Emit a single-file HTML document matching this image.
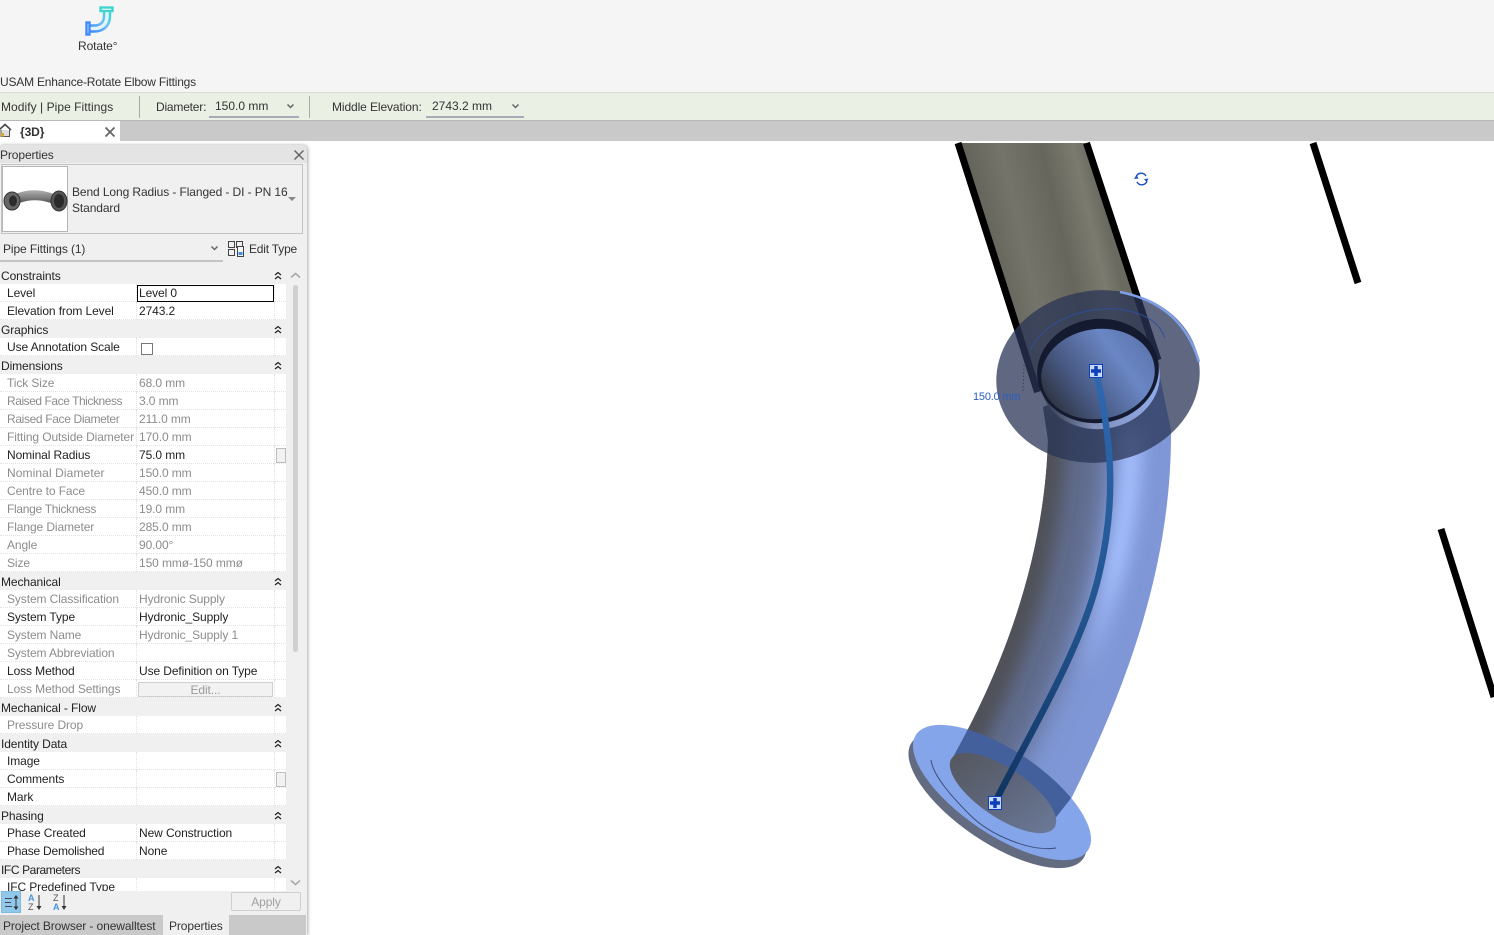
<!DOCTYPE html>
<html><head><meta charset="utf-8">
<style>
html,body{margin:0;padding:0;background:#fff}
body{width:1494px;height:935px;overflow:hidden;position:relative;font-family:"Liberation Sans",sans-serif;font-size:12px;color:#222;letter-spacing:-.1px}
.a{position:absolute;white-space:nowrap}
#tbl{position:absolute;left:0;top:266px;width:286px;height:625px;overflow:hidden;background:#fff}
.r{position:relative;height:18px;line-height:18px;box-sizing:border-box;border-bottom:1px dotted #e2e2e2}
.r i{position:absolute;top:0;font-style:normal;white-space:nowrap}
.r .n{left:7px}.r .v{left:139px}
.r:before{content:"";position:absolute;left:136px;top:0;height:18px;border-left:1px dotted #e2e2e2}
.r:after{content:"";position:absolute;left:274px;top:0;height:18px;border-left:1px dotted #e2e2e2}
.g{color:#8c8c8c}
.s{height:18px;line-height:20px;background:#f0f0f0;position:relative;padding-left:1px;color:#222}
.s svg{position:absolute;left:274px;top:5px}
.box{position:absolute;left:276px;top:2px;width:8px;height:13px;border:1px solid #bdbdbd;background:#f2f2f2}
</style></head><body>
<!-- top ribbon -->
<div class="a" style="left:0;top:0;width:1494px;height:93px;background:#f5f5f5"></div>
<svg class="a" style="left:80px;top:4px" width="36" height="32" viewBox="0 0 36 32">
<defs><linearGradient id="ic" x1="0" y1="1" x2="1" y2="0"><stop offset="0" stop-color="#3f8cff"/><stop offset=".55" stop-color="#6cc0f5"/><stop offset="1" stop-color="#3fd6d0"/></linearGradient></defs>
<path d="M9 24.500H14C22 24.500 27 20 27 12V8" fill="none" stroke="url(#ic)" stroke-width="8.500"/>
<path d="M9 24.500H14C22 24.500 27 20 27 12V8" fill="none" stroke="#e4f3fb" stroke-width="3.500"/>
<rect x="6.500" y="18.500" width="3" height="12" fill="#f5f5f5" stroke="#3f8cff" stroke-width="2.400"/>
<rect x="20.500" y="3.500" width="12" height="3.500" fill="#f5f5f5" stroke="#3fd6d0" stroke-width="2.400"/>
</svg>
<div class="a" style="left:78px;top:39px;color:#333">Rotate°</div>
<div class="a" style="left:0;top:75px;color:#333;letter-spacing:-.2px">USAM Enhance-Rotate Elbow Fittings</div>
<!-- options bar -->
<div class="a" style="left:0;top:92px;width:1494px;height:29px;background:#eaf0e4;border-top:1px solid #d8dcd4;border-bottom:1px solid #b8b8b8;box-sizing:border-box"></div>
<div class="a" style="left:1px;top:100px;color:#333;letter-spacing:.05px">Modify | Pipe Fittings</div>
<div class="a" style="left:139px;top:96px;width:1px;height:22px;background:#aaa"></div>
<div class="a" style="left:156px;top:100px;color:#333;letter-spacing:-.2px">Diameter:</div>
<div class="a" style="left:215px;top:99px;color:#333;letter-spacing:0">150.0 mm</div>
<div class="a" style="left:209px;top:116px;width:90px;height:2px;background:#aab"></div>
<svg class="a" style="left:286px;top:103px" width="9" height="7"><path d="M1.500 1.500L4.500 4.500L7.500 1.500" fill="none" stroke="#666" stroke-width="1.500"/></svg>
<div class="a" style="left:309px;top:96px;width:1px;height:22px;background:#aaa"></div>
<div class="a" style="left:332px;top:100px;color:#333">Middle Elevation:</div>
<div class="a" style="left:432px;top:99px;color:#333;letter-spacing:0">2743.2 mm</div>
<div class="a" style="left:426px;top:116px;width:98px;height:2px;background:#aab"></div>
<svg class="a" style="left:511px;top:103px" width="9" height="7"><path d="M1.500 1.500L4.500 4.500L7.500 1.500" fill="none" stroke="#666" stroke-width="1.500"/></svg>
<!-- tab bar -->
<div class="a" style="left:0;top:121px;width:1494px;height:20px;background:#c9c9c9"></div>
<div class="a" style="left:0;top:121px;width:120px;height:20px;background:#fff"></div>
<svg class="a" style="left:0;top:123px" width="13" height="15" viewBox="0 0 13 15"><path d="M-1 7L5 1.500L11 7" fill="none" stroke="#444" stroke-width="1.600"/><path d="M1 7V13.500H9.500V7" fill="#ddd" stroke="#555"/><rect x="1" y="10" width="3" height="3.500" fill="#d9a83a"/></svg>
<div class="a" style="left:20px;top:125px;font-weight:bold;color:#333">{3D}</div>
<svg class="a" style="left:104px;top:126px" width="12" height="12"><path d="M1.500 1.500L10.500 10.500M10.500 1.500L1.500 10.500" stroke="#666" stroke-width="1.800"/></svg>

<!-- viewport -->
<svg class="a" style="left:0;top:0" width="1494" height="935" viewBox="0 0 1494 935">
<defs>
<linearGradient id="pp" gradientUnits="userSpaceOnUse" x1="965" y1="200" x2="1095" y2="170">
<stop offset="0" stop-color="#5f5f55"/><stop offset=".35" stop-color="#74746a"/><stop offset=".65" stop-color="#66665c"/><stop offset=".88" stop-color="#7b7b70"/><stop offset="1" stop-color="#6a6a60"/></linearGradient>
<linearGradient id="inn" gradientUnits="userSpaceOnUse" x1="1040" y1="410" x2="1150" y2="350">
<stop offset="0" stop-color="#26272c"/><stop offset=".35" stop-color="#46577f"/><stop offset=".75" stop-color="#6a86c4"/><stop offset="1" stop-color="#5d76b0"/></linearGradient>
<linearGradient id="lip" gradientUnits="userSpaceOnUse" x1="1045" y1="400" x2="1150" y2="400"><stop offset="0" stop-color="#3a4258"/><stop offset=".4" stop-color="#8190b8"/><stop offset="1" stop-color="#8fa8e6"/></linearGradient>
<linearGradient id="cl" gradientUnits="userSpaceOnUse" x1="0" y1="372" x2="0" y2="802"><stop offset="0" stop-color="#2f68b2"/><stop offset=".55" stop-color="#22558f"/><stop offset=".85" stop-color="#173f72"/><stop offset="1" stop-color="#10345f"/></linearGradient>
<linearGradient id="hl" gradientUnits="userSpaceOnUse" x1="0" y1="470" x2="0" y2="680"><stop offset="0" stop-color="#a6c0ff"/><stop offset=".45" stop-color="#a6c0ff"/><stop offset="1" stop-color="#a6c0ff" stop-opacity="0"/></linearGradient>
<filter id="b1" filterUnits="userSpaceOnUse" x="880" y="380" width="340" height="500"><feGaussianBlur stdDeviation="14"/></filter>
<filter id="b2" filterUnits="userSpaceOnUse" x="880" y="380" width="340" height="500"><feGaussianBlur stdDeviation="8"/></filter>
<linearGradient id="hole" gradientUnits="userSpaceOnUse" x1="950" y1="770" x2="1060" y2="810"><stop offset="0" stop-color="#55585f"/><stop offset=".5" stop-color="#5e667c"/><stop offset="1" stop-color="#6a7896"/></linearGradient>
<clipPath id="elc"><path d="M1043 407L1048 440C1045 540 1015 640 965 735L950 763L1050 825L1072 797C1130 680 1172 560 1171 430L1157 363Z"/></clipPath>
</defs>
<!-- lower flange face -->
<ellipse cx="997.500" cy="800.500" rx="103.600" ry="42" fill="#626b80" transform="rotate(34 997.500 800.500)"/>
<ellipse cx="1002" cy="792.500" rx="103.600" ry="42" fill="#85a5ea" transform="rotate(34 1002 792.500)"/>
<!-- elbow -->
<path d="M1043 407L1048 440C1045 540 1015 640 965 735L950 763L1050 825L1072 797C1130 680 1172 560 1171 430L1157 363Z" fill="#7f97d6"/>
<g clip-path="url(#elc)">
<path d="M1048 400C1045 540 1015 640 965 735L950 763" fill="none" stroke="#5f6b8a" stroke-width="125" filter="url(#b1)"/>
<path d="M1048 400C1045 540 1015 640 965 735L950 763" fill="none" stroke="#4f5158" stroke-width="40" filter="url(#b2)"/>
<path d="M1131 430C1133 510 1110 620 1060 730" fill="none" stroke="url(#hl)" stroke-width="20" filter="url(#b2)"/>
<ellipse cx="1002" cy="792.500" rx="103.600" ry="42" fill="#44609c" transform="rotate(34 1002 792.500)"/></g>
<ellipse cx="1003" cy="793" rx="62" ry="24.500" fill="url(#hole)" transform="rotate(34 1003 793)"/>
<path d="M931 760C933 775 950 795 970 815S1030 852 1056 848" fill="none" stroke="#3c4c7a" stroke-width="1"/>
<!-- upper pipe -->
<path d="M958 143H1086.500L1158 360L1037.500 392Z" fill="url(#pp)"/>
<path d="M958 143L1037.500 392M1086.500 143L1158 360" stroke="#000" stroke-width="7" fill="none"/>
<!-- upper flange -->
<ellipse cx="1098" cy="376.500" rx="102" ry="86" fill="#2a3656" fill-opacity=".75" transform="rotate(-8 1098 376.500)"/>
<path d="M1120 292Q1182 304 1199 362" fill="none" stroke="#7f9fe6" stroke-width="2.500"/>
<path d="M1030 350C1055 300 1150 295 1165 338" fill="none" stroke="#2f4f9a" stroke-width="1"/>
<ellipse cx="1100" cy="378" rx="60" ry="51" fill="url(#lip)" transform="rotate(-8 1100 378)"/>
<ellipse cx="1098" cy="371" rx="61" ry="52" fill="#141b31" transform="rotate(-8 1098 371)"/>
<ellipse cx="1098" cy="374" rx="57" ry="45" fill="url(#inn)" transform="rotate(-8 1098 374)"/>
<!-- centerline -->
<path d="M1096 372C1112 440 1116 500 1100 570C1085 640 1040 715 995 802" fill="none" stroke="url(#cl)" stroke-width="6.500"/>
<!-- other lines -->
<path d="M1313 143L1358 283M1441 529L1494 697" stroke="#000" stroke-width="7" fill="none"/>
<!-- dim -->
<path d="M1024 365L1023 392" stroke="#444" stroke-dasharray="1.500 2" fill="none"/>
<text x="973" y="400" font-family="Liberation Sans,sans-serif" font-size="11" fill="#2a5cc4" letter-spacing="-.2">150.0 mm</text>
<!-- rotate icon -->
<g fill="none" stroke="#1a52c0" stroke-width="1.400"><path d="M1136 177A5.500 5.500 0 0 1 1146 176"/><path d="M1147 181A5.500 5.500 0 0 1 1137 182"/></g>
<path d="M1134 179L1138.500 178.500L1136.500 175ZM1148.500 178.500L1144 179L1146.500 182Z" fill="#1a52c0"/>
<!-- grips -->
<rect x="1089.500" y="364.500" width="13" height="13" fill="#c9d8f4" stroke="#0c3fb8"/><path d="M1096 366V376M1091 371H1101" stroke="#0c3fb8" stroke-width="3.500"/>
<rect x="988.500" y="796.500" width="13" height="13" fill="#c9d8f4" stroke="#0c3fb8"/><path d="M995 798V808M990 803H1000" stroke="#0c3fb8" stroke-width="3.500"/>
</svg>

<!-- properties panel -->
<div class="a" style="left:0;top:145px;width:307px;height:790px;background:#f0f0f0;border-radius:0 5px 0 0;box-shadow:1px 0 3px #aaa"></div>
<div class="a" style="left:0;top:145px;width:307px;height:18px;background:#e4e4e4;border-radius:0 5px 0 0"></div>
<div class="a" style="left:0;top:148px;color:#333">Properties</div>
<svg class="a" style="left:293px;top:149px" width="12" height="12"><path d="M1.500 1.500L10.500 10.500M10.500 1.500L1.500 10.500" stroke="#666" stroke-width="1.500"/></svg>
<div class="a" style="left:1px;top:164px;width:300px;height:68px;border:1px solid #c4c4c4;background:#f0f0f0"></div>
<div class="a" style="left:2px;top:166px;width:66px;height:66px;border:1px solid #b5b5b5;background:#fff;box-sizing:border-box"></div>
<svg class="a" style="left:2px;top:183px" width="66" height="32" viewBox="0 0 66 32">
<defs><linearGradient id="th" x1="0" y1="0" x2="0" y2="1"><stop offset="0" stop-color="#b0b0b0"/><stop offset=".5" stop-color="#777"/><stop offset="1" stop-color="#333"/></linearGradient></defs>
<path d="M8 14C22 5 42 5 58 14L57 24C42 15 24 15 9 24Z" fill="url(#th)"/>
<ellipse cx="10" cy="18" rx="8" ry="9" fill="#666" stroke="#333"/><ellipse cx="11" cy="18" rx="4" ry="5.500" fill="#2c2c2c"/>
<ellipse cx="57" cy="18" rx="8" ry="10" fill="#555" stroke="#333"/><ellipse cx="57" cy="18" rx="5" ry="7" fill="#2a2a2a"/>
</svg>
<div class="a" style="left:72px;top:185px;color:#333">Bend Long Radius - Flanged - DI - PN 16</div>
<div class="a" style="left:72px;top:201px;color:#333">Standard</div>
<svg class="a" style="left:288px;top:197px" width="9" height="5"><path d="M0 0H8L4 4Z" fill="#888"/></svg>
<div class="a" style="left:3px;top:242px;color:#333">Pipe Fittings (1)</div>
<div class="a" style="left:0;top:260px;width:223px;height:2px;background:#c4c4c4"></div>
<svg class="a" style="left:210px;top:245px" width="9" height="7"><path d="M1.500 1.500L4.500 4.500L7.500 1.500" fill="none" stroke="#666" stroke-width="1.500"/></svg>
<svg class="a" style="left:227px;top:240px" width="18" height="18" viewBox="0 0 18 18" fill="none" stroke="#444"><rect x="1.500" y="1.500" width="6" height="6"/><rect x="9.500" y="1.500" width="6" height="6"/><rect x="1.500" y="9.500" width="6" height="6"/><rect x="10.500" y="6.500" width="6" height="10" fill="#f5f5f5"/><rect x="11.500" y="12" width="4" height="3" fill="#3f8fdf" stroke="none"/></svg>
<div class="a" style="left:249px;top:242px;color:#333;letter-spacing:-.2px">Edit Type</div>

<div id="tbl">
<div class="s">Constraints<svg width="8" height="9"><path d="M1 4L4 1.500L7 4M1 8L4 5.500L7 8" fill="none" stroke="#222" stroke-width="1.200"/></svg></div>
<div class="r"><i class="n">Level</i></div>
<div class="r"><i class="n">Elevation from Level</i><i class="v">2743.2</i></div>
<div class="s">Graphics<svg width="8" height="9"><path d="M1 4L4 1.500L7 4M1 8L4 5.500L7 8" fill="none" stroke="#222" stroke-width="1.200"/></svg></div>
<div class="r"><i class="n">Use Annotation Scale</i></div>
<div class="s">Dimensions<svg width="8" height="9"><path d="M1 4L4 1.500L7 4M1 8L4 5.500L7 8" fill="none" stroke="#222" stroke-width="1.200"/></svg></div>
<div class="r g"><i class="n">Tick Size</i><i class="v">68.0 mm</i></div>
<div class="r g"><i class="n" style="letter-spacing:-.45px">Raised Face Thickness</i><i class="v">3.0 mm</i></div>
<div class="r g"><i class="n" style="letter-spacing:-.35px">Raised Face Diameter</i><i class="v">211.0 mm</i></div>
<div class="r g"><i class="n">Fitting Outside Diameter</i><i class="v">170.0 mm</i></div>
<div class="r"><i class="n">Nominal Radius</i><i class="v">75.0 mm</i><b class="box"></b></div>
<div class="r g"><i class="n" style="letter-spacing:.1px">Nominal Diameter</i><i class="v">150.0 mm</i></div>
<div class="r g"><i class="n">Centre to Face</i><i class="v">450.0 mm</i></div>
<div class="r g"><i class="n" style="letter-spacing:-.3px">Flange Thickness</i><i class="v">19.0 mm</i></div>
<div class="r g"><i class="n">Flange Diameter</i><i class="v">285.0 mm</i></div>
<div class="r g"><i class="n">Angle</i><i class="v">90.00°</i></div>
<div class="r g"><i class="n">Size</i><i class="v">150 mmø-150 mmø</i></div>
<div class="s">Mechanical<svg width="8" height="9"><path d="M1 4L4 1.500L7 4M1 8L4 5.500L7 8" fill="none" stroke="#222" stroke-width="1.200"/></svg></div>
<div class="r g"><i class="n">System Classification</i><i class="v">Hydronic Supply</i></div>
<div class="r"><i class="n">System Type</i><i class="v">Hydronic_Supply</i></div>
<div class="r g"><i class="n">System Name</i><i class="v">Hydronic_Supply 1</i></div>
<div class="r g"><i class="n">System Abbreviation</i></div>
<div class="r"><i class="n">Loss Method</i><i class="v">Use Definition on Type</i></div>
<div class="r g"><i class="n">Loss Method Settings</i><span style="position:absolute;left:138px;top:2px;width:133px;height:13px;line-height:14px;border:1px solid #cfcfcf;background:#f2f2f2;text-align:center;color:#999">Edit...</span></div>
<div class="s">Mechanical - Flow<svg width="8" height="9"><path d="M1 4L4 1.500L7 4M1 8L4 5.500L7 8" fill="none" stroke="#222" stroke-width="1.200"/></svg></div>
<div class="r g"><i class="n">Pressure Drop</i></div>
<div class="s">Identity Data<svg width="8" height="9"><path d="M1 4L4 1.500L7 4M1 8L4 5.500L7 8" fill="none" stroke="#222" stroke-width="1.200"/></svg></div>
<div class="r"><i class="n">Image</i></div>
<div class="r"><i class="n">Comments</i><b class="box"></b></div>
<div class="r"><i class="n">Mark</i></div>
<div class="s">Phasing<svg width="8" height="9"><path d="M1 4L4 1.500L7 4M1 8L4 5.500L7 8" fill="none" stroke="#222" stroke-width="1.200"/></svg></div>
<div class="r"><i class="n">Phase Created</i><i class="v">New Construction</i></div>
<div class="r"><i class="n" style="letter-spacing:-.22px">Phase Demolished</i><i class="v">None</i></div>
<div class="s" style="letter-spacing:-.4px">IFC Parameters<svg width="8" height="9"><path d="M1 4L4 1.500L7 4M1 8L4 5.500L7 8" fill="none" stroke="#222" stroke-width="1.200"/></svg></div>
<div class="r"><i class="n">IFC Predefined Type</i></div>
</div>
<div class="a" style="left:137px;top:285px;width:135px;height:15px;border:1px solid #000;background:#fff;line-height:15px;text-indent:1px">Level 0</div>
<div class="a" style="left:141px;top:343px;width:10px;height:10px;border:1px solid #777;background:#fff"></div>
<!-- scrollbar -->
<div class="a" style="left:287px;top:266px;width:16px;height:625px;background:#f0f0f0"></div>
<div class="a" style="left:293px;top:285px;width:5px;height:367px;background:#d0d0d0;border-radius:3px"></div>
<svg class="a" style="left:290px;top:272px" width="11" height="7"><path d="M1 5.500L5.500 1.500L10 5.500" fill="none" stroke="#aaa" stroke-width="1.600"/></svg>
<svg class="a" style="left:290px;top:879px" width="11" height="7"><path d="M1 1.500L5.500 5.500L10 1.500" fill="none" stroke="#aaa" stroke-width="1.600"/></svg>
<!-- bottom tools -->
<div class="a" style="left:1px;top:891px;width:20px;height:22px;background:#90c8ec;border:1px solid #7fb9df;box-sizing:border-box"></div>
<svg class="a" style="left:3px;top:894px" width="18" height="18" fill="none"><path d="M2 4.500H9M2 8.500H8M2 12.500H9" stroke="#445"/><path d="M13 3V14" stroke="#333"/><path d="M13 1L10.500 4.500H15.500ZM13 16L10.500 12.500H15.500Z" fill="#333"/></svg>
<svg class="a" style="left:26px;top:892px" width="18" height="20"><text x="2" y="9" font-family="Liberation Sans,sans-serif" font-size="9" font-weight="bold" fill="#4a90e0">A</text><text x="2" y="18" font-family="Liberation Sans,sans-serif" font-size="9" fill="#555">Z</text><path d="M13 3V16" stroke="#333"/><path d="M13 18L10.500 14H15.500Z" fill="#333"/></svg>
<svg class="a" style="left:51px;top:892px" width="18" height="20"><text x="2" y="9" font-family="Liberation Sans,sans-serif" font-size="9" fill="#555">Z</text><text x="2" y="18" font-family="Liberation Sans,sans-serif" font-size="9" font-weight="bold" fill="#4a90e0">A</text><path d="M13 3V16" stroke="#333"/><path d="M13 18L10.500 14H15.500Z" fill="#333"/></svg>
<div class="a" style="left:231px;top:892px;width:68px;height:17px;border:1px solid #cfcfcf;border-radius:2px;text-align:center;line-height:18px;color:#a0a0a0">Apply</div>
<!-- bottom tabs -->
<div class="a" style="left:0;top:915px;width:306px;height:20px;background:#c9c9c9"></div>
<div class="a" style="left:163px;top:915px;width:66px;height:20px;background:#f0f0f0"></div>
<div class="a" style="left:3px;top:919px;color:#333">Project Browser - onewalltest</div>
<div class="a" style="left:169px;top:919px;color:#333">Properties</div>
</body></html>
